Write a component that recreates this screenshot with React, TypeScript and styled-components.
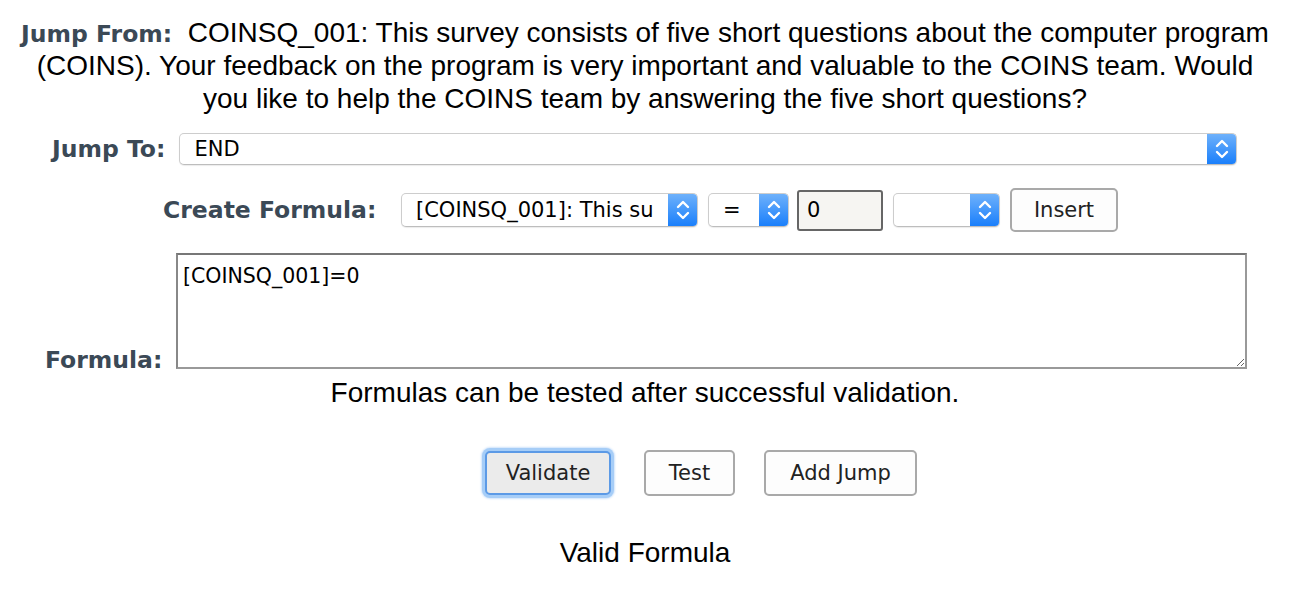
import React from 'react'
import styled, { createGlobalStyle } from 'styled-components'

const GlobalStyle = createGlobalStyle`
  body {
    margin: 0;
    background: #fff;
    font-family: "Liberation Sans", Arial, sans-serif;
  }
`

function Chevrons() {
  return (
    <svg width="14" height="22" viewBox="0 0 14 22">
      <path d="M2 8 L7 3 L12 8" fill="none" stroke="#fff" strokeWidth="2.4" strokeLinecap="round" strokeLinejoin="round" />
      <path d="M2 14 L7 19 L12 14" fill="none" stroke="#fff" strokeWidth="2.4" strokeLinecap="round" strokeLinejoin="round" />
    </svg>
  )
}

function Select({ value, width, grow }: { value: string; width?: number; grow?: boolean }) {
  return (
    <SelectBox $width={width} $grow={grow}>
      <SelectValue>{value}</SelectValue>
      <SelectArrow>
        <Chevrons />
      </SelectArrow>
    </SelectBox>
  )
}

export default function App() {
  return (
    <>
      <GlobalStyle />
      <Page>
        <Header>
          <Label>Jump From:</Label>
          <HeaderText>
            &nbsp; COINSQ_001: This survey consists of five short questions about the computer program (COINS).
            Your feedback on the program is very important and valuable to the COINS team. Would you like to help
            the COINS team by answering the five short questions?
          </HeaderText>
        </Header>

        <JumpToRow>
          <Label>Jump To:</Label>
          <Select value="END" grow />
        </JumpToRow>

        <CreateRow>
          <CreateLabel>Create Formula:</CreateLabel>
          <Controls>
            <Select value="[COINSQ_001]: This su" width={297} />
            <Select value="=" width={81} />
            <ValueInput defaultValue="0" />
            <Select value="" width={107} />
            <Button $w={108} $h={44}>Insert</Button>
          </Controls>
        </CreateRow>

        <FormulaRow>
          <FormulaLabel>Formula:</FormulaLabel>
          <FormulaArea defaultValue="[COINSQ_001]=0" />
        </FormulaRow>

        <Note>Formulas can be tested after successful validation.</Note>

        <ButtonRow>
          <Button $w={126} $h={44} $focused>Validate</Button>
          <Button $w={91} $h={46}>Test</Button>
          <Button $w={153} $h={46}>Add Jump</Button>
        </ButtonRow>

        <Status>Valid Formula</Status>
      </Page>
    </>
  )
}

///////////////////////////////////////////////////////////////////////////////////

const Page = styled.div`
  width: 1290px;
  padding-top: 16px;
`

const Header = styled.div`
  width: 1256px;
  margin-left: 17px;
  text-align: center;
  font-size: 28px;
  line-height: 33px;
  color: #000;
`

const HeaderText = styled.span`
  font-size: 28px;
`

const Label = styled.span`
  font-family: "DejaVu Sans", Verdana, sans-serif;
  font-weight: 700;
  font-size: 23.5px;
  line-height: 28px;
  color: #3b4956;
  white-space: nowrap;
`

const JumpToRow = styled.div`
  display: flex;
  align-items: center;
  gap: 14px;
  margin-top: 18px;
  padding-left: 52px;
  padding-right: 53px;
`

const SelectBox = styled.div<{ $width?: number; $grow?: boolean }>`
  display: flex;
  align-items: stretch;
  height: 32px;
  ${(p) => (p.$grow ? 'flex: 1;' : `width: ${p.$width}px; flex: none;`)}
  border: 1px solid #cdcdcd;
  border-bottom-color: #bdbdbd;
  border-radius: 5px;
  background: #fff;
  box-shadow: 0 1px 1px rgba(0, 0, 0, 0.08);
  overflow: hidden;
  box-sizing: border-box;
`

const SelectValue = styled.div`
  flex: 1;
  padding-left: 14px;
  display: flex;
  align-items: center;
  font-family: "DejaVu Sans", "Lucida Grande", sans-serif;
  font-size: 21px;
  color: #000;
  white-space: nowrap;
  overflow: hidden;
`

const SelectArrow = styled.div`
  flex: none;
  width: 29px;
  display: flex;
  align-items: center;
  justify-content: center;
  background: linear-gradient(#6eb1fb, #1a7ffb);
`

const CreateRow = styled.div`
  display: flex;
  align-items: center;
  margin-top: 23px;
  padding-left: 163px;
`

const CreateLabel = styled(Label)`
  width: 238px;
`

const Controls = styled.div`
  display: flex;
  align-items: center;
  gap: 10px;

  & > ${SelectBox} {
    height: 34px;
  }
`

const ValueInput = styled.input`
  width: 86px;
  height: 41px;
  box-sizing: border-box;
  margin-left: -2px;
  border: 2px solid #666;
  border-radius: 3px;
  background: #f6f5f2;
  padding: 0 8px;
  font-family: "DejaVu Sans", "Lucida Grande", sans-serif;
  font-size: 21px;
  color: #000;
  outline: none;
`

const Button = styled.button<{ $w: number; $h: number; $focused?: boolean }>`
  width: ${(p) => p.$w}px;
  height: ${(p) => p.$h}px;
  box-sizing: border-box;
  border: 2px solid ${(p) => (p.$focused ? '#5c9ae6' : '#a9a9a9')};
  border-radius: 5px;
  background: ${(p) => (p.$focused ? '#ebebeb' : '#fdfdfd')};
  box-shadow: ${(p) => (p.$focused ? '0 0 0 3px #a6cdf7, 0 0 2px 4px #cfe3fb' : 'none')};
  font-family: "DejaVu Sans", "Lucida Grande", sans-serif;
  font-size: 21px;
  color: #222;
  padding: 0 0 0;
  line-height: 24px;
  cursor: pointer;
`

const FormulaRow = styled.div`
  display: flex;
  align-items: flex-end;
  margin-top: 21px;
  padding-left: 45px;
`

const FormulaLabel = styled(Label)`
  width: 131px;
  line-height: 18px;
`

const FormulaArea = styled.textarea`
  width: 1071px;
  height: 116px;
  box-sizing: border-box;
  margin: 0;
  border: 2px solid #999;
  border-top-color: #777;
  border-left-color: #888;
  padding: 9px 5px 6px;
  font-family: "DejaVu Sans", Verdana, sans-serif;
  font-size: 20.5px;
  color: #000;
  outline: none;
  display: block;
`

const Note = styled.div`
  text-align: center;
  font-size: 28px;
  line-height: 32px;
  margin-top: 8px;
  color: #000;
`

const ButtonRow = styled.div`
  display: flex;
  align-items: center;
  gap: 29px;
  margin-top: 41px;
  padding-left: 485px;

  & > :nth-child(2) {
    margin-left: 4px;
  }
`

const Status = styled.div`
  text-align: center;
  font-size: 28px;
  line-height: 32px;
  margin-top: 41px;
  color: #000;
`
